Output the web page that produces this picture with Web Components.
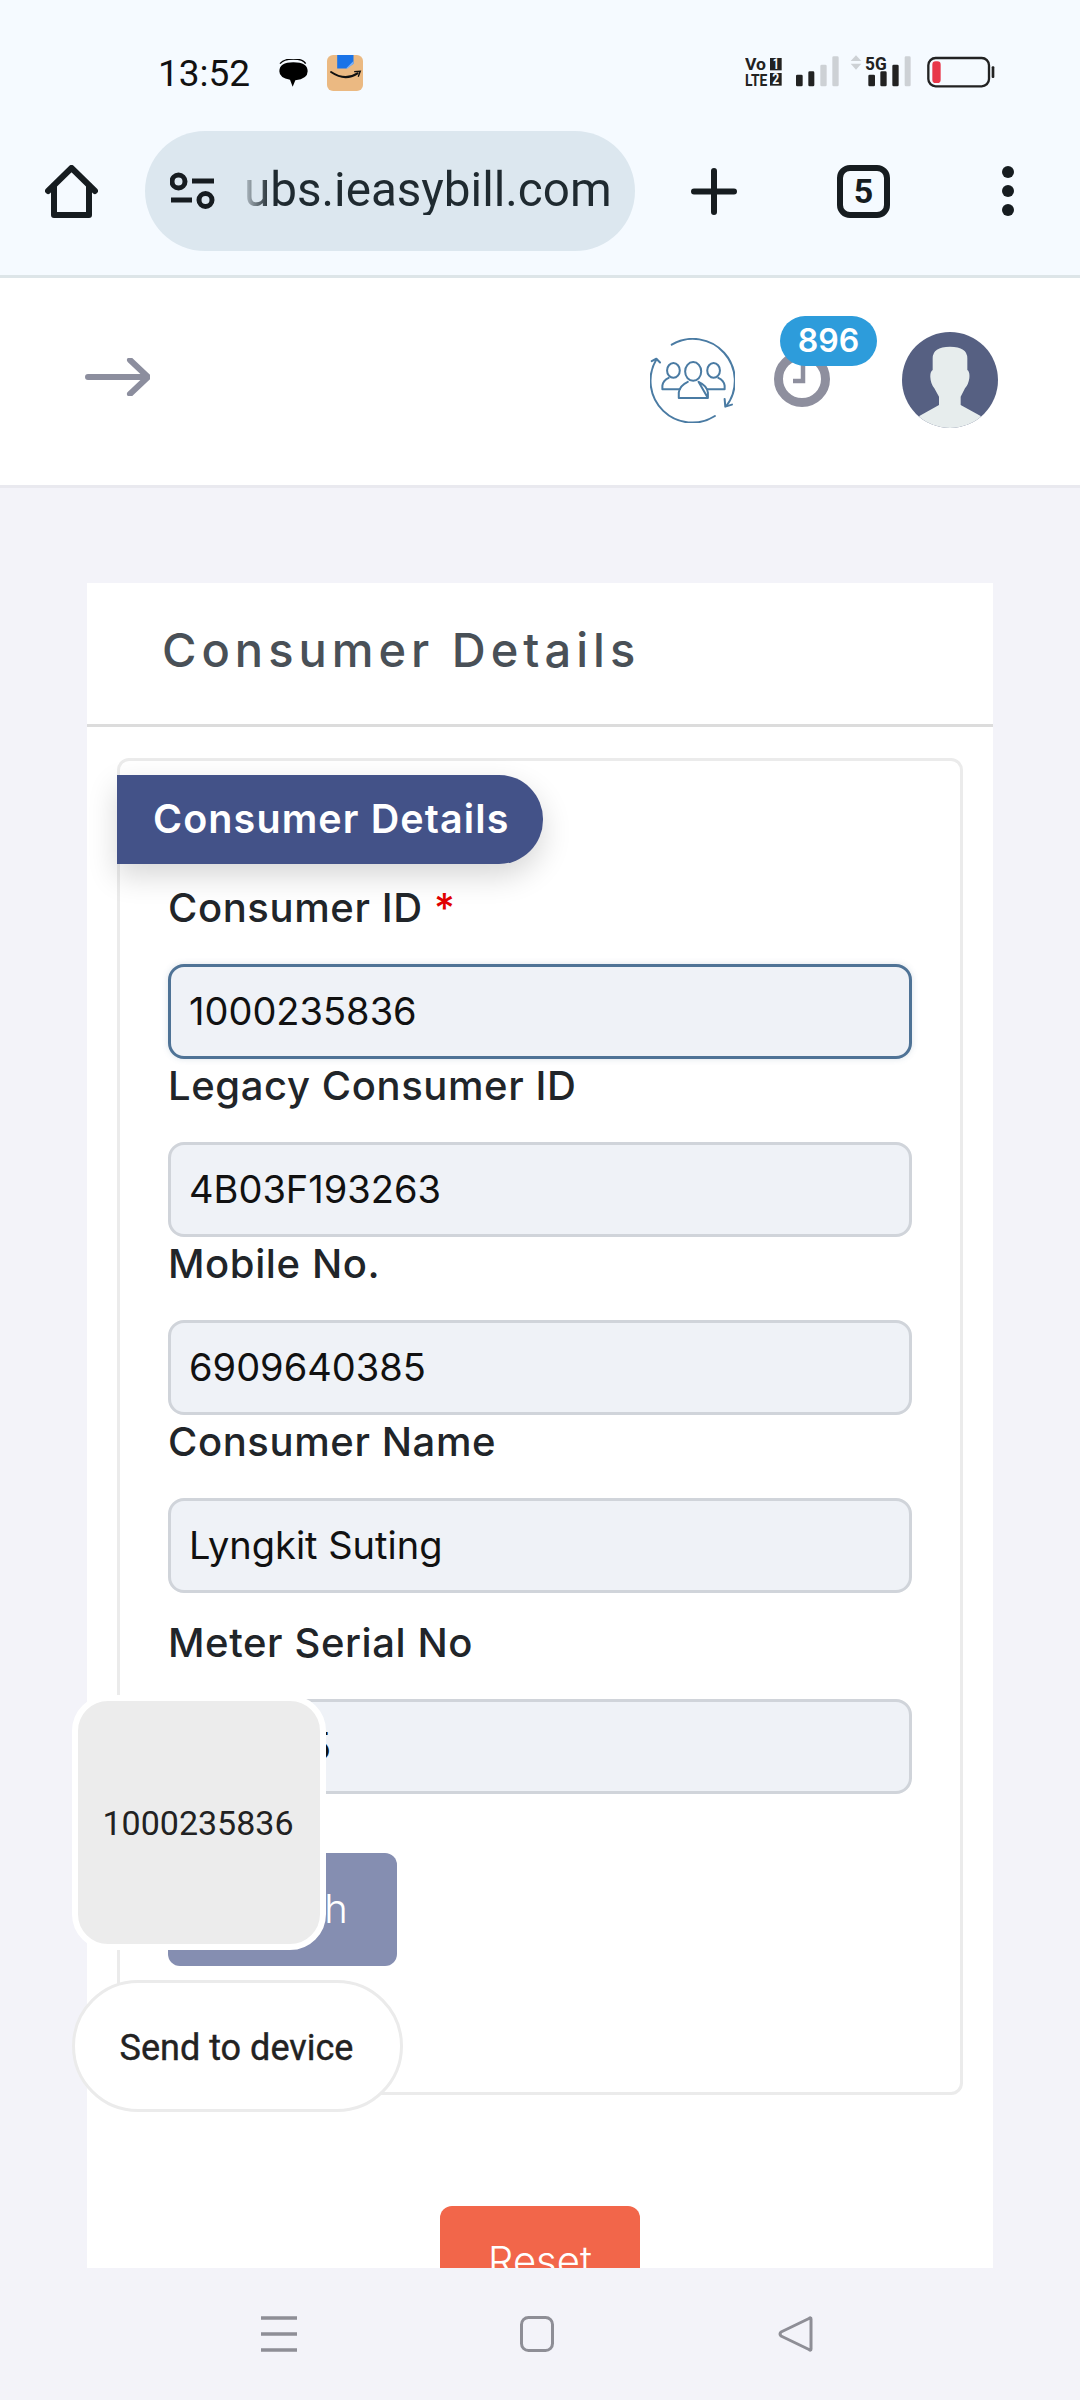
<!DOCTYPE html>
<html lang="en">
<head>
<meta charset="utf-8">
<title>Consumer Details</title>
<style>
  html, body { margin: 0; padding: 0; background: #f3f3f9; }
  phone-page { font-family: "Inter", "Liberation Sans", sans-serif; }
</style>
</head>
<body>
<phone-page>
  <status-bar></status-bar>
  <browser-bar url="ubs.ieasybill.com" tabs="5"></browser-bar>
  <app-header count="896"></app-header>
  <page-main>
    <consumer-card heading="Consumer Details">
      <field-set legend="Consumer Details">
        <form-field label="Consumer ID" required focused>1000235836</form-field>
        <form-field label="Legacy Consumer ID">4B03F193263</form-field>
        <form-field label="Mobile No.">6909640385</form-field>
        <form-field label="Consumer Name">Lyngkit Suting</form-field>
        <form-field label="Meter Serial No" spaced>604635</form-field>
        <action-button slot="action" tone="search">Search</action-button>
      </field-set>
      <action-button slot="footer" tone="reset">Reset</action-button>
    </consumer-card>
  </page-main>
  <nav-bar></nav-bar>
  <clip-popup text="1000235836" action="Send to device"></clip-popup>
</phone-page>

<script>
class PhonePage extends HTMLElement {
  constructor() {
    super();
    this.attachShadow({ mode: 'open' }).innerHTML = `
      <style>
        :host {
          display: flex;
          flex-direction: column;
          position: relative;
          width: 1080px;
          height: 2400px;
          overflow: hidden;
          background: #f3f3f9;
        }
      </style>
      <slot></slot>`;
  }
}

class StatusBar extends HTMLElement {
  constructor() {
    super();
    this.attachShadow({ mode: 'open' }).innerHTML = `
      <style>
        :host {
          display: flex;
          align-items: center;
          box-sizing: border-box;
          height: 131px;
          padding: 15px 85px 0 158px;
          background: #f5faff;
          color: #111;
        }
        .time { font: 400 37px/1 Roboto, sans-serif; width: 121px; }
        svg { display: block; }
        .chat { margin-right: 19px; }
        .right { margin-left: auto; margin-top: -4px; }
        text { font-family: Roboto, sans-serif; font-weight: 700; }
      </style>
      <span class="time">13:52</span>
      <svg class="chat" width="29" height="28" viewBox="418 58 85 84">
        <path d="M420 72 Q430 58 460 58 Q490 58 497 72" fill="none" stroke="#000" stroke-width="4"/>
        <path d="M418 95 Q418 68 460 68 Q503 68 503 95 Q503 118 466 122 L458 141 L450 120 Q418 115 418 95Z" fill="#000"/>
      </svg>
      <svg width="36" height="36" viewBox="562 44 106 106">
        <rect x="562" y="44" width="106" height="106" rx="18" fill="#ebb982"/>
        <path d="M592 44H640V70L620 84H592Z" fill="#1a73e8"/>
        <path d="M618 84L640 62V70L622 84Z" fill="#7fb2f5"/>
        <path d="M574 94Q615 122 652 98" fill="none" stroke="#111" stroke-width="6" stroke-linecap="round"/>
        <path d="M642 93L660 92L654 108" fill="none" stroke="#111" stroke-width="4"/>
      </svg>
      <svg class="right" width="250" height="40" viewBox="45 34 750 120">
        <text x="45" y="92" font-size="52" textLength="63" lengthAdjust="spacingAndGlyphs" fill="#222">Vo</text>
        <rect x="120" y="55" width="35" height="37" fill="#222"/>
        <text x="128" y="88" font-size="42" textLength="19" lengthAdjust="spacingAndGlyphs" fill="#f5faff">1</text>
        <text x="45" y="138" font-size="52" textLength="67" lengthAdjust="spacingAndGlyphs" fill="#222">LTE</text>
        <rect x="120" y="100" width="35" height="38" fill="#222"/>
        <text x="127" y="134" font-size="42" textLength="21" lengthAdjust="spacingAndGlyphs" fill="#f5faff">2</text>
        <g fill="#222">
          <rect x="198" y="105" width="20" height="35" rx="4"/>
          <rect x="235" y="95" width="18" height="45" rx="4"/>
          <rect x="415" y="105" width="20" height="35" rx="4"/>
          <rect x="451" y="95" width="19" height="45" rx="4"/>
          <rect x="487" y="75" width="19" height="65" rx="4"/>
        </g>
        <g fill="#cdd1d5">
          <rect x="271" y="75" width="19" height="65" rx="4"/>
          <rect x="307" y="50" width="19" height="90" rx="4"/>
          <rect x="524" y="50" width="18" height="90" rx="4"/>
          <path d="M378 47L362 64H394Z"/>
          <path d="M362 72H394L378 90Z"/>
        </g>
        <text x="405" y="90" font-size="56" textLength="65" lengthAdjust="spacingAndGlyphs" fill="#222">5G</text>
        <rect x="595" y="55" width="182" height="85" rx="22" fill="none" stroke="#222" stroke-width="7"/>
        <rect x="607" y="65" width="25" height="65" rx="10" fill="#e8374a"/>
        <rect x="785" y="80" width="8" height="35" rx="3" fill="#222"/>
      </svg>`;
  }
}

class BrowserBar extends HTMLElement {
  constructor() {
    super();
    const url = this.getAttribute('url');
    const tabs = this.getAttribute('tabs');
    this.attachShadow({ mode: 'open' }).innerHTML = `
      <style>
        :host {
          display: flex;
          align-items: center;
          box-sizing: border-box;
          height: 147px;
          padding: 0 0 24px 45px;
          background: #f5faff;
          border-bottom: 3px solid #dde5e8;
          color: #161c20;
        }
        svg { display: block; flex: none; }
        .omni {
          display: flex;
          align-items: center;
          box-sizing: border-box;
          width: 490px;
          height: 120px;
          margin-left: 47px;
          padding-left: 25px;
          border-radius: 60px;
          background: #dce7ef;
          overflow: hidden;
        }
        .url {
          margin-left: 28px;
          font: 400 47.600px/1 Roboto, sans-serif;
          color: #1f2a30;
          white-space: nowrap;
          -webkit-mask-image: linear-gradient(to right, rgba(0,0,0,.2), #000 26px);
          mask-image: linear-gradient(to right, rgba(0,0,0,.2), #000 26px);
        }
        .plus { margin-left: 56px; }
        .tabs {
          display: flex;
          align-items: center;
          justify-content: center;
          box-sizing: border-box;
          width: 53px;
          height: 53px;
          margin-left: 100px;
          border: 6px solid #161c20;
          border-radius: 13px;
          font: 700 34px/1 Roboto, sans-serif;
        }
        .more { margin-left: 112px; }
      </style>
      <svg width="53" height="53" viewBox="45 164 53 53" fill="none" stroke="#161c20" stroke-width="6" stroke-linejoin="round" stroke-linecap="round">
        <path d="M48 190L71.500 167L95 190"/>
        <path d="M54 185V214H89V185"/>
      </svg>
      <div class="omni">
        <svg width="46" height="38" viewBox="170 172 46 38" fill="none" stroke="#161c20" stroke-width="5">
          <circle cx="178.500" cy="181.500" r="6.500"/>
          <circle cx="205.500" cy="200" r="6.500"/>
          <path d="M192 181H214M171 200H192"/>
        </svg>
        <span class="url">${url}</span>
      </div>
      <svg class="plus" width="46" height="47" viewBox="0 0 46 47" stroke="#161c20" stroke-width="6" stroke-linecap="round">
        <path d="M23 3V44M3 23.500H43"/>
      </svg>
      <div class="tabs">${tabs}</div>
      <svg class="more" width="12" height="50" viewBox="0 0 12 50" fill="#161c20">
        <circle cx="6" cy="6" r="6"/><circle cx="6" cy="25" r="6"/><circle cx="6" cy="44" r="6"/>
      </svg>`;
  }
}

class AppHeader extends HTMLElement {
  constructor() {
    super();
    const count = this.getAttribute('count');
    this.attachShadow({ mode: 'open' }).innerHTML = `
      <style>
        :host {
          display: flex;
          align-items: center;
          box-sizing: border-box;
          height: 210px;
          padding: 0 82px 3px 85px;
          background: #fff;
          border-bottom: 3px solid #e9e9ef;
        }
        svg { display: block; flex: none; }
        .arrow { margin-top: -6px; }
        .team { margin-left: auto; margin-right: -2px; }
        .clock { position: relative; width: 56px; height: 56px; margin: -2px 72px 0 41px; }
        .badge {
          position: absolute;
          left: 6px;
          top: -35px;
          width: 97px;
          height: 50px;
          border-radius: 25px;
          background: #2d9cdb;
          color: #fff;
          font: 600 32px/50px Inter, sans-serif;
          text-align: center;
        }
      </style>
      <svg class="arrow" width="65" height="38" viewBox="85 358 65 38" fill="none" stroke="#8c8e9e" stroke-width="6" stroke-linecap="round" stroke-linejoin="round">
        <path d="M88 377H146M130 360L148 377L130 394"/>
      </svg>
      <svg class="team" width="85" height="85" viewBox="143 143 254 254" fill="none" stroke="#4a7ba3" stroke-width="6" stroke-linecap="round" stroke-linejoin="round">
        <path d="M208 163A125 125 0 0 1 372 345"/>
        <path d="M388 342L368 348L366 325"/>
        <path d="M337 376A125 125 0 0 1 162 207"/>
        <path d="M148 212L162 205L173 216"/>
        <ellipse cx="272" cy="243" rx="24" ry="28"/>
        <path d="M229 322V306Q232 285 256 274M288 274Q313 285 316 306V322Z M229 322H316"/>
        <ellipse cx="213" cy="240" rx="19" ry="22"/>
        <path d="M232 296H180V285Q182 270 199 262"/>
        <ellipse cx="333" cy="240" rx="19" ry="22"/>
        <path d="M314 296H366V285Q364 270 347 262"/>
      </svg>
      <div class="clock">
        <svg width="56" height="56" viewBox="0 0 56 56" fill="none" stroke="#8e8f9e">
          <circle cx="28" cy="28" r="23.500" stroke-width="9"/>
          <path d="M29 10V30H19" stroke-width="4.500"/>
        </svg>
        <div class="badge">${count}</div>
      </div>
      <svg width="96" height="96" viewBox="906 126 288 288">
        <defs><clipPath id="round"><circle cx="1050" cy="270" r="144"/></clipPath></defs>
        <g clip-path="url(#round)">
          <rect x="906" y="126" width="288" height="288" fill="#566082"/>
          <path d="M998 205Q998 170 1050 170Q1102 170 1102 205L1102 240Q1110 245 1108 265Q1105 285 1095 295L1082 320V345L1142 378V420H958V378L1017 345V320L1003 295Q992 282 991 262Q990 245 998 240Z" fill="#e7eded"/>
        </g>
      </svg>`;
  }
}

class PageMain extends HTMLElement {
  constructor() {
    super();
    this.attachShadow({ mode: 'open' }).innerHTML = `
      <style>
        :host {
          display: block;
          flex: 1;
          min-height: 0;
          overflow: hidden;
          padding: 95px 87px 0;
        }
      </style>
      <slot></slot>`;
  }
}

class ConsumerCard extends HTMLElement {
  constructor() {
    super();
    const heading = this.getAttribute('heading');
    this.attachShadow({ mode: 'open' }).innerHTML = `
      <style>
        :host { display: block; background: #fff; }
        h2 {
          margin: 0;
          height: 141px;
          padding-left: 75px;
          border-bottom: 3px solid #dcdcdc;
          font: 500 47px/133px Inter, sans-serif;
          letter-spacing: 5px;
          color: #495057;
        }
        .body { padding: 31px 30px 0; }
        .footer { display: flex; justify-content: center; margin-top: 111px; }
      </style>
      <h2>${heading}</h2>
      <div class="body">
        <slot></slot>
        <div class="footer"><slot name="footer"></slot></div>
      </div>`;
  }
}

class FieldSet extends HTMLElement {
  constructor() {
    super();
    const legend = this.getAttribute('legend');
    this.attachShadow({ mode: 'open' }).innerHTML = `
      <style>
        :host {
          display: block;
          box-sizing: border-box;
          height: 1337px;
          border: 3px solid #ebebeb;
          border-radius: 12px;
          padding-top: 14px;
        }
        .legend {
          box-sizing: border-box;
          width: 426px;
          height: 89px;
          margin-left: -3px;
          padding-left: 36px;
          border-radius: 0 44px 44px 0;
          background: #435288;
          box-shadow: 0 12px 30px rgba(0, 0, 0, .16);
          color: #fff;
          font: 600 39.500px/88px Inter, sans-serif;
          letter-spacing: 1.100px;
        }
        .fields { padding: 17px 48px 0; }
        .action { margin-top: 59px; }
      </style>
      <div class="legend">${legend}</div>
      <div class="fields">
        <slot></slot>
        <div class="action"><slot name="action"></slot></div>
      </div>`;
  }
}

class FormField extends HTMLElement {
  constructor() {
    super();
    const label = this.getAttribute('label');
    const star = this.hasAttribute('required') ? ' <b>*</b>' : '';
    this.attachShadow({ mode: 'open' }).innerHTML = `
      <style>
        :host { display: block; font-family: Inter, sans-serif; }
        :host([spaced]) { margin-top: 23px; }
        label {
          display: block;
          height: 54px;
          margin-bottom: 29px;
          font-size: 40px;
          font-weight: 500;
          letter-spacing: .6px;
          line-height: 54px;
          color: #212529;
        }
        b { color: #e00000; font-weight: 500; }
        .input {
          box-sizing: border-box;
          height: 95px;
          padding-left: 18px;
          border: 3px solid #d0d4da;
          border-radius: 16px;
          background: #eff2f7;
          font-size: 38px;
          line-height: 88px;
          color: #111;
        }
        :host([focused]) .input {
          border-color: #4f7396;
          box-shadow: 0 0 6px rgba(79, 115, 150, .2);
        }
      </style>
      <label>${label}${star}</label>
      <div class="input"><slot></slot></div>`;
  }
}

class ActionButton extends HTMLElement {
  constructor() {
    super();
    this.attachShadow({ mode: 'open' }).innerHTML = `
      <style>
        :host {
          display: flex;
          align-items: center;
          justify-content: center;
          box-sizing: border-box;
          height: 113px;
          border-radius: 12px;
          color: #fff;
          font: 300 40px/1 Inter, sans-serif;
        }
        :host([tone="search"]) { width: 229px; background: #858eb1; padding-bottom: 2px; }
        :host([tone="reset"]) { width: 200px; background: #f2664a; padding-bottom: 4px; }
      </style>
      <slot></slot>`;
  }
}

class NavBar extends HTMLElement {
  constructor() {
    super();
    this.attachShadow({ mode: 'open' }).innerHTML = `
      <style>
        :host {
          display: flex;
          align-items: center;
          flex: none;
          height: 132px;
          padding-left: 261px;
          background: #f3f3f9;
        }
        svg { display: block; }
        .home { margin-left: 223px; }
        .back { margin-left: 224px; }
      </style>
      <svg width="36" height="36" viewBox="0 0 36 36" stroke="#8e8e96" stroke-width="3.500">
        <path d="M0 2H36M0 18H36M0 34H36"/>
      </svg>
      <svg class="home" width="34" height="36" viewBox="0 0 34 36" fill="none" stroke="#8e8e96" stroke-width="3">
        <rect x="1.500" y="1.500" width="31" height="33" rx="7"/>
      </svg>
      <svg class="back" width="35" height="36" viewBox="0 0 35 36" fill="none" stroke="#8e8e96" stroke-width="3" stroke-linejoin="round">
        <path d="M33 3Q33 1 31 2.500L3 16Q1 18 3 20L31 33.500Q33 35 33 33Z"/>
      </svg>`;
  }
}

class ClipPopup extends HTMLElement {
  constructor() {
    super();
    const text = this.getAttribute('text');
    const action = this.getAttribute('action');
    this.attachShadow({ mode: 'open' }).innerHTML = `
      <style>
        :host {
          position: absolute;
          left: 72px;
          top: 1695px;
          font-family: Roboto, sans-serif;
          color: #222;
        }
        .preview {
          display: flex;
          align-items: center;
          justify-content: center;
          box-sizing: border-box;
          width: 254px;
          height: 255px;
          padding-right: 2px;
          border: 6px solid #fff;
          border-radius: 36px;
          background: #ececec;
          font-size: 34px;
        }
        .send {
          display: flex;
          align-items: center;
          justify-content: center;
          box-sizing: border-box;
          width: 331px;
          height: 132px;
          margin-top: 30px;
          padding: 3px 2px 0 0;
          border: 3px solid #ebebeb;
          border-radius: 66px;
          background: #fff;
          font-size: 36px;
          font-weight: 400;
          -webkit-text-stroke: .4px #222;
        }
      </style>
      <div class="preview">${text}</div>
      <div class="send">${action}</div>`;
  }
}

customElements.define('phone-page', PhonePage);
customElements.define('status-bar', StatusBar);
customElements.define('browser-bar', BrowserBar);
customElements.define('app-header', AppHeader);
customElements.define('page-main', PageMain);
customElements.define('consumer-card', ConsumerCard);
customElements.define('field-set', FieldSet);
customElements.define('form-field', FormField);
customElements.define('action-button', ActionButton);
customElements.define('nav-bar', NavBar);
customElements.define('clip-popup', ClipPopup);
</script>
</body>
</html>
